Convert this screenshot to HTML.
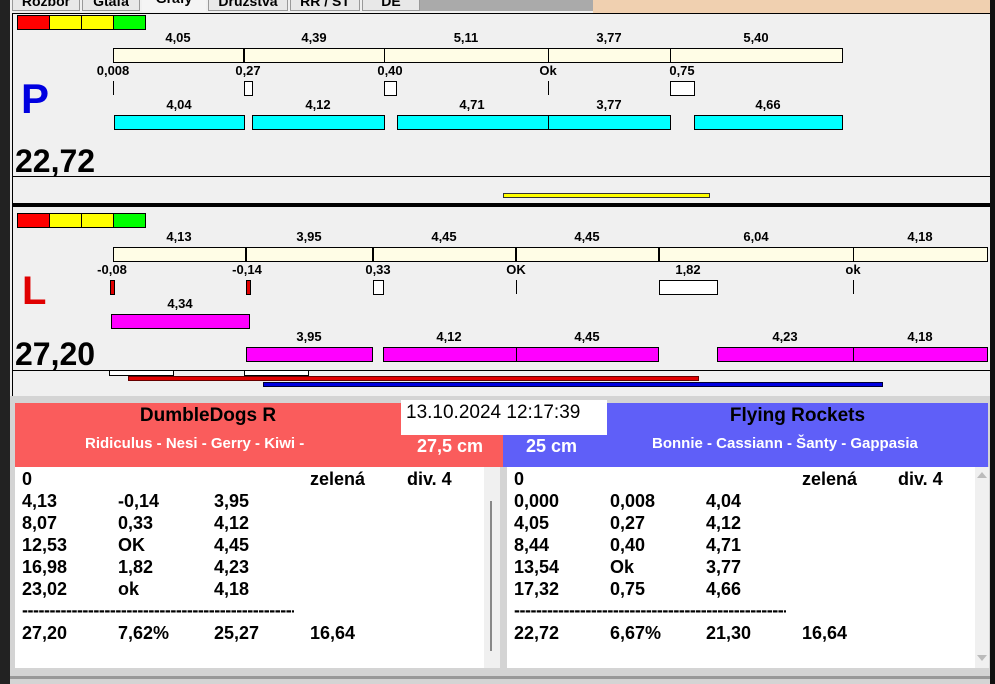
<!DOCTYPE html>
<html><head><meta charset="utf-8"><style>
*{margin:0;padding:0;box-sizing:border-box}
body{width:995px;height:684px;overflow:hidden;background:#f0f0f0;position:relative;font-family:"Liberation Sans",Arial,sans-serif}
.a{position:absolute}
.t{position:absolute;font-weight:bold;font-size:13px;color:#000;transform:translateX(-50%);white-space:nowrap;line-height:14px}
.cr{position:absolute;background:#fffde6;border:1px solid #000;height:15px}
.cy{position:absolute;background:#00ffff;border:1px solid #000;height:15px}
.mg{position:absolute;background:#ff00ff;border:1px solid #000;height:15px}
.vl{position:absolute;width:2px;background:#000}
.tk{position:absolute;width:1px;background:#000;height:14px}
.bx{position:absolute;background:#fff;border:1px solid #000;height:15px}
.sq{position:absolute;height:15px;border:1px solid #000;width:33px}
.row{position:absolute;font-weight:bold;font-size:18px;line-height:22px;white-space:nowrap}
.dash{position:absolute;font-weight:bold;font-size:18px;line-height:10px;height:10px;overflow:hidden;width:272px;white-space:nowrap;letter-spacing:-0.5px}
</style></head><body>
<div class="a" style="left:0;top:0;width:10px;height:684px;background:#222"></div>
<div class="a" style="left:990px;top:0;width:5px;height:684px;background:#111"></div>
<div class="a" style="left:10px;top:0;width:980px;height:13px;background:#f0f0f0"></div>
<div class="a" style="left:420px;top:0;width:173px;height:11px;background:#aaa"></div>
<div class="a" style="left:593px;top:0;width:397px;height:13px;background:#f0d0b0"></div>
<div class="a" style="left:12px;top:-6px;width:68px;height:17px;border:1px solid #999;background:#e8e8e8;font-size:14px;font-weight:bold;text-align:center;line-height:12px">Rozbor</div>
<div class="a" style="left:82px;top:-6px;width:58px;height:17px;border:1px solid #999;background:#e8e8e8;font-size:14px;font-weight:bold;text-align:center;line-height:12px">Gtafa</div>
<div class="a" style="left:142px;top:-8px;width:64px;height:20px;background:#f4f4f4;font-size:14px;font-weight:bold;text-align:center;line-height:12px">Grafy</div>
<div class="a" style="left:208px;top:-6px;width:80px;height:17px;border:1px solid #999;background:#e8e8e8;font-size:14px;font-weight:bold;text-align:center;line-height:12px">Družstva</div>
<div class="a" style="left:290px;top:-6px;width:70px;height:17px;border:1px solid #999;background:#e8e8e8;font-size:14px;font-weight:bold;text-align:center;line-height:12px">RR / ST</div>
<div class="a" style="left:362px;top:-6px;width:58px;height:17px;border:1px solid #999;background:#e8e8e8;font-size:14px;font-weight:bold;text-align:center;line-height:12px">DE</div>

<div class="a" style="left:12px;top:13px;width:978px;height:194px;border-top:1px solid #000;border-left:1px solid #000;border-bottom:4px solid #000"></div>
<div class="sq" style="left:17px;top:15px;background:#f00"></div>
<div class="sq" style="left:49px;top:15px;background:#ff0"></div>
<div class="sq" style="left:81px;top:15px;background:#ff0"></div>
<div class="sq" style="left:113px;top:15px;background:#0f0"></div>
<div class="t" style="left:178px;top:31px">4,05</div>
<div class="t" style="left:314px;top:31px">4,39</div>
<div class="t" style="left:466px;top:31px">5,11</div>
<div class="t" style="left:609px;top:31px">3,77</div>
<div class="t" style="left:756px;top:31px">5,40</div>
<div class="cr" style="left:113px;top:48px;width:730px"></div>
<div class="vl" style="left:243px;top:48px;height:15px"></div>
<div class="tk" style="left:384px;top:48px;height:15px"></div>
<div class="tk" style="left:548px;top:48px;height:15px"></div>
<div class="tk" style="left:670px;top:48px;height:15px"></div>
<div class="t" style="left:113px;top:64px">0,008</div>
<div class="t" style="left:248px;top:64px">0,27</div>
<div class="t" style="left:390px;top:64px">0,40</div>
<div class="t" style="left:548px;top:64px">Ok</div>
<div class="t" style="left:682px;top:64px">0,75</div>
<div class="tk" style="left:113px;top:81px"></div>
<div class="bx" style="left:244px;top:81px;width:9px"></div>
<div class="bx" style="left:384px;top:81px;width:13px"></div>
<div class="tk" style="left:548px;top:81px"></div>
<div class="bx" style="left:670px;top:81px;width:25px"></div>
<div class="a" style="left:21px;top:76px;font-size:42px;font-weight:bold;color:#0000e0;line-height:46px">P</div>
<div class="t" style="left:179px;top:98px">4,04</div>
<div class="t" style="left:318px;top:98px">4,12</div>
<div class="t" style="left:472px;top:98px">4,71</div>
<div class="t" style="left:609px;top:98px">3,77</div>
<div class="t" style="left:768px;top:98px">4,66</div>
<div class="cy" style="left:114px;top:115px;width:131px"></div>
<div class="cy" style="left:252px;top:115px;width:133px"></div>
<div class="cy" style="left:397px;top:115px;width:152px"></div>
<div class="cy" style="left:548px;top:115px;width:123px"></div>
<div class="cy" style="left:694px;top:115px;width:149px"></div>
<div class="a" style="left:15px;top:143px;font-size:32px;font-weight:bold;line-height:36px">22,72</div>
<div class="a" style="left:13px;top:176px;width:977px;height:1px;background:#000"></div>
<div class="a" style="left:503px;top:193px;width:207px;height:5px;background:#ff0;border:1px solid #333"></div>

<div class="a" style="left:12px;top:207px;width:978px;height:191px;border-left:1px solid #000"></div>
<div class="sq" style="left:17px;top:213px;background:#f00"></div>
<div class="sq" style="left:49px;top:213px;background:#ff0"></div>
<div class="sq" style="left:81px;top:213px;background:#ff0"></div>
<div class="sq" style="left:113px;top:213px;background:#0f0"></div>
<div class="t" style="left:179px;top:230px">4,13</div>
<div class="t" style="left:309px;top:230px">3,95</div>
<div class="t" style="left:444px;top:230px">4,45</div>
<div class="t" style="left:587px;top:230px">4,45</div>
<div class="t" style="left:756px;top:230px">6,04</div>
<div class="t" style="left:920px;top:230px">4,18</div>
<div class="cr" style="left:113px;top:247px;width:875px"></div>
<div class="vl" style="left:245px;top:247px;height:15px"></div>
<div class="vl" style="left:372px;top:247px;height:15px"></div>
<div class="vl" style="left:515px;top:247px;height:15px"></div>
<div class="vl" style="left:658px;top:247px;height:15px"></div>
<div class="tk" style="left:853px;top:247px;height:15px"></div>
<div class="t" style="left:112px;top:263px">-0,08</div>
<div class="t" style="left:247px;top:263px">-0,14</div>
<div class="t" style="left:378px;top:263px">0,33</div>
<div class="t" style="left:516px;top:263px">OK</div>
<div class="t" style="left:688px;top:263px">1,82</div>
<div class="t" style="left:853px;top:263px">ok</div>
<div class="bx" style="left:110px;top:280px;width:5px;background:#e00000;height:15px"></div>
<div class="bx" style="left:246px;top:280px;width:5px;background:#e00000;height:15px"></div>
<div class="bx" style="left:373px;top:280px;width:11px;height:15px"></div>
<div class="tk" style="left:516px;top:280px"></div>
<div class="bx" style="left:659px;top:280px;width:59px;height:15px"></div>
<div class="tk" style="left:853px;top:280px"></div>
<div class="a" style="left:22px;top:268px;font-size:40px;font-weight:bold;color:#e00000;line-height:46px">L</div>
<div class="t" style="left:180px;top:297px">4,34</div>
<div class="mg" style="left:111px;top:314px;width:139px"></div>
<div class="a" style="left:15px;top:336px;font-size:32px;font-weight:bold;line-height:36px">27,20</div>
<div class="t" style="left:309px;top:330px">3,95</div>
<div class="t" style="left:449px;top:330px">4,12</div>
<div class="t" style="left:587px;top:330px">4,45</div>
<div class="t" style="left:785px;top:330px">4,23</div>
<div class="t" style="left:920px;top:330px">4,18</div>
<div class="mg" style="left:246px;top:347px;width:127px"></div>
<div class="mg" style="left:383px;top:347px;width:276px"></div>
<div class="tk" style="left:516px;top:347px;height:15px"></div>
<div class="mg" style="left:717px;top:347px;width:271px"></div>
<div class="tk" style="left:853px;top:347px;height:15px"></div>
<div class="a" style="left:13px;top:370px;width:977px;height:1px;background:#000"></div>
<div class="a" style="left:109px;top:371px;width:65px;height:5px;background:#fff;border:1px solid #000;border-top:none"></div>
<div class="a" style="left:244px;top:371px;width:65px;height:5px;background:#fff;border:1px solid #000;border-top:none"></div>
<div class="a" style="left:128px;top:376px;width:571px;height:5px;background:#e00000;border:1px solid #600"></div>
<div class="a" style="left:263px;top:382px;width:620px;height:5px;background:#0000e0;border:1px solid #003"></div>

<div class="a" style="left:10px;top:396px;width:980px;height:288px;background:#d4d4d4"></div>
<div class="a" style="left:15px;top:403px;width:488px;height:64px;background:#fa5c5c"></div>
<div class="a" style="left:503px;top:403px;width:485px;height:64px;background:#5f5ff8"></div>
<div class="a" style="left:401px;top:400px;width:206px;height:35px;background:#fff;font-size:19px;line-height:25px;padding-left:5px">13.10.2024 12:17:39</div>
<div class="a" style="left:15px;top:404px;width:386px;text-align:center;font-size:19px;font-weight:bold;line-height:24px">DumbleDogs R</div>
<div class="a" style="left:85px;top:434px;font-size:15px;font-weight:bold;color:#fff;line-height:20px">Ridiculus - Nesi - Gerry - Kiwi -</div>
<div class="a" style="left:417px;top:435px;font-size:18px;font-weight:bold;color:#fff;line-height:22px">27,5 cm</div>
<div class="a" style="left:526px;top:435px;font-size:18px;font-weight:bold;color:#fff;line-height:22px">25 cm</div>
<div class="a" style="left:607px;top:404px;width:381px;text-align:center;font-size:19px;font-weight:bold;line-height:24px">Flying Rockets</div>
<div class="a" style="left:652px;top:434px;font-size:15px;font-weight:bold;color:#fff;line-height:20px">Bonnie - Cassiann - Šanty - Gappasia</div>

<div class="a" style="left:15px;top:467px;width:469px;height:201px;background:#fff"></div>
<div class="a" style="left:484px;top:467px;width:16px;height:201px;background:#f0f0f0"></div>
<div class="a" style="left:490px;top:501px;width:2px;height:150px;background:#888"></div>
<div class="a" style="left:507px;top:467px;width:468px;height:201px;background:#fff"></div>
<div class="a" style="left:975px;top:467px;width:14px;height:201px;background:#f0f0f0"></div>
<div class="a" style="left:977px;top:472px;width:0;height:0;border-left:5px solid transparent;border-right:5px solid transparent;border-bottom:6px solid #bbb"></div>
<div class="a" style="left:977px;top:655px;width:0;height:0;border-left:5px solid transparent;border-right:5px solid transparent;border-top:6px solid #bbb"></div>
<div class="a" style="left:10px;top:676px;width:980px;height:3px;background:#999"></div>

<div class="row" style="left:22px;top:468px">0</div>
<div class="row" style="left:310px;top:468px">zelená</div>
<div class="row" style="left:407px;top:468px">div. 4</div>
<div class="row" style="left:22px;top:490px">4,13</div><div class="row" style="left:118px;top:490px">-0,14</div><div class="row" style="left:214px;top:490px">3,95</div>
<div class="row" style="left:22px;top:512px">8,07</div><div class="row" style="left:118px;top:512px">0,33</div><div class="row" style="left:214px;top:512px">4,12</div>
<div class="row" style="left:22px;top:534px">12,53</div><div class="row" style="left:118px;top:534px">OK</div><div class="row" style="left:214px;top:534px">4,45</div>
<div class="row" style="left:22px;top:556px">16,98</div><div class="row" style="left:118px;top:556px">1,82</div><div class="row" style="left:214px;top:556px">4,23</div>
<div class="row" style="left:22px;top:578px">23,02</div><div class="row" style="left:118px;top:578px">ok</div><div class="row" style="left:214px;top:578px">4,18</div>
<div class="dash" style="left:22px;top:605px">--------------------------------------------------</div>
<div class="row" style="left:22px;top:622px">27,20</div><div class="row" style="left:118px;top:622px">7,62%</div><div class="row" style="left:214px;top:622px">25,27</div><div class="row" style="left:310px;top:622px">16,64</div>

<div class="row" style="left:514px;top:468px">0</div>
<div class="row" style="left:802px;top:468px">zelená</div>
<div class="row" style="left:898px;top:468px">div. 4</div>
<div class="row" style="left:514px;top:490px">0,000</div><div class="row" style="left:610px;top:490px">0,008</div><div class="row" style="left:706px;top:490px">4,04</div>
<div class="row" style="left:514px;top:512px">4,05</div><div class="row" style="left:610px;top:512px">0,27</div><div class="row" style="left:706px;top:512px">4,12</div>
<div class="row" style="left:514px;top:534px">8,44</div><div class="row" style="left:610px;top:534px">0,40</div><div class="row" style="left:706px;top:534px">4,71</div>
<div class="row" style="left:514px;top:556px">13,54</div><div class="row" style="left:610px;top:556px">Ok</div><div class="row" style="left:706px;top:556px">3,77</div>
<div class="row" style="left:514px;top:578px">17,32</div><div class="row" style="left:610px;top:578px">0,75</div><div class="row" style="left:706px;top:578px">4,66</div>
<div class="dash" style="left:514px;top:605px">--------------------------------------------------</div>
<div class="row" style="left:514px;top:622px">22,72</div><div class="row" style="left:610px;top:622px">6,67%</div><div class="row" style="left:706px;top:622px">21,30</div><div class="row" style="left:802px;top:622px">16,64</div>
</body></html>
